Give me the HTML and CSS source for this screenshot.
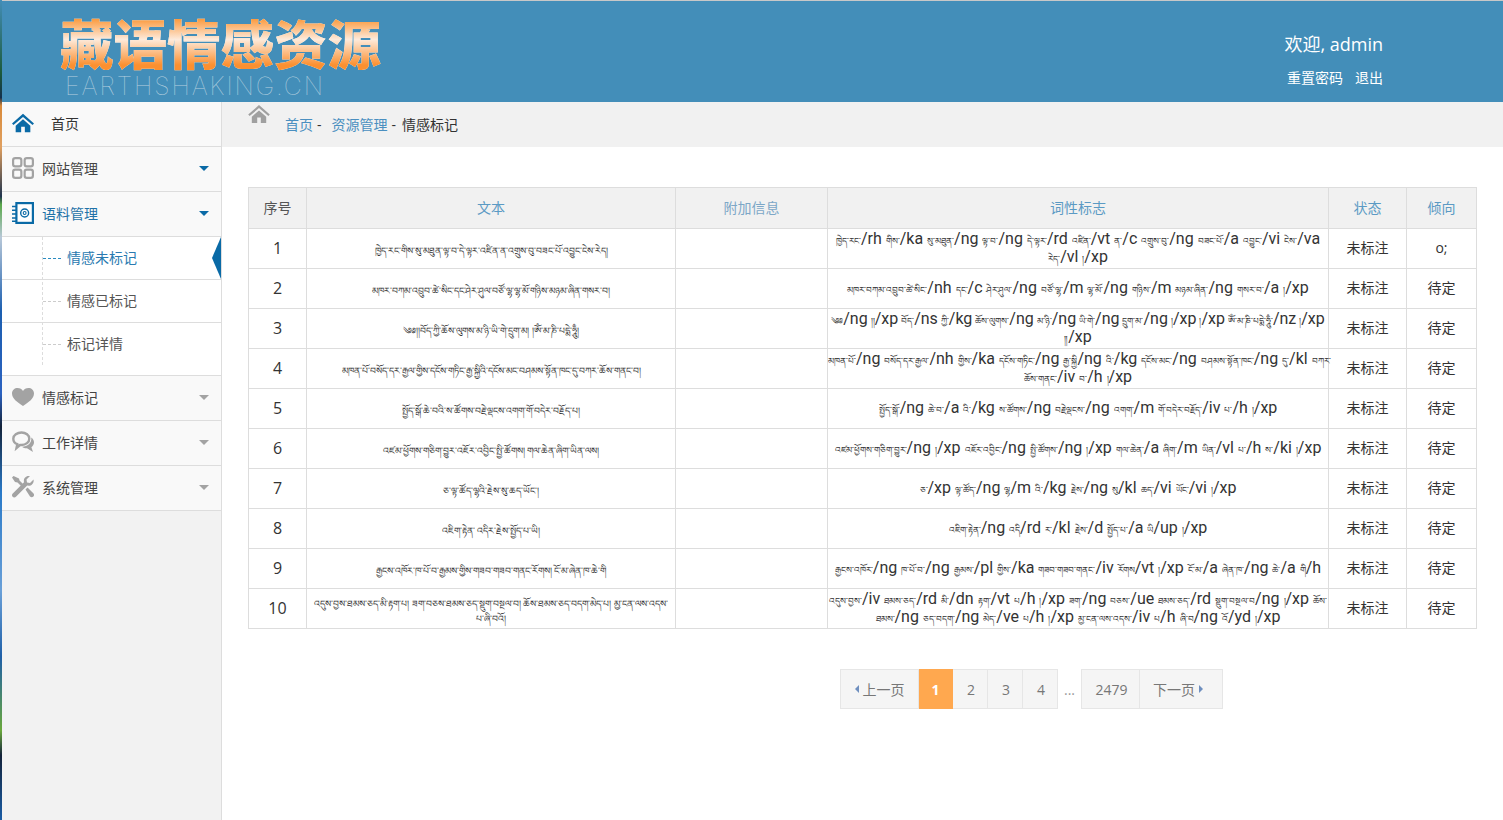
FILE: index.html
```html
<!DOCTYPE html>
<html lang="zh">
<head>
<meta charset="utf-8">
<title>藏语情感资源</title>
<link rel="stylesheet" href="styles.css">
</head>
<body>
<div class="page">
<header class="top">
  <div class="logo">
    <div class="logo-cn">藏语情感资源</div>
    <div class="logo-en">EARTHSHAKING.CN</div>
  </div>
  <div class="user">
    <div class="hello">欢迎, admin</div>
    <div class="links"><a>重置密码</a><a>退出</a></div>
  </div>
</header>
<div class="body">
  <aside class="side">
    <div class="item home">
      <svg class="ico" viewBox="0 0 24 20"><path fill="#0a6aa6" d="M12 0 0 10.500l1.600 1.800L12 3.400l10.400 8.900 1.600-1.800zM4 13v7h6v-6h4v6h6v-7l-8-7z"/></svg>
      <span>首页</span>
    </div>
    <div class="item">
      <svg class="ico" viewBox="0 0 20 20"><g fill="none" stroke="#a3a3a3" stroke-width="2"><rect x="1" y="1" width="7.500" height="7.500" rx="2"/><rect x="11.500" y="1" width="7.500" height="7.500" rx="2"/><rect x="1" y="11.500" width="7.500" height="7.500" rx="2"/><rect x="11.500" y="11.500" width="7.500" height="7.500" rx="2"/></g></svg>
      <span>网站管理</span><i class="caret blue"></i>
    </div>
    <div class="item open">
      <svg class="ico" viewBox="0 0 20 20"><path fill="#0a6aa6" d="M3 0h17v20H3z"/><path fill="#fff" d="M5 2h13v16H5z"/><circle cx="11.500" cy="10" r="3.600" fill="none" stroke="#0a6aa6" stroke-width="1.300"/><circle cx="11.500" cy="10" r="1.300" fill="none" stroke="#0a6aa6"/><path stroke="#0a6aa6" stroke-width="1.400" d="M0 4h4M0 7.500h4M0 11h4M0 14.500h4M0 17.500h4"/></svg>
      <span>语料管理</span><i class="caret blue"></i>
    </div>
    <ul class="sub">
      <li class="cur">情感未标记</li>
      <li>情感已标记</li>
      <li class="last">标记详情</li>
    </ul>
    <div class="item">
      <svg class="ico" viewBox="0 0 22 18"><path fill="#a3a3a3" d="M11 18C5 14 0 10.500 0 5.500 0 2 2.800 0 5.500 0 8 0 10 1.200 11 3c1-1.800 3-3 5.500-3C19.200 0 22 2 22 5.500 22 10.500 17 14 11 18z"/></svg>
      <span>情感标记</span><i class="caret"></i>
    </div>
    <div class="item">
      <svg class="ico" viewBox="0 0 22 22"><path fill="none" stroke="#a3a3a3" stroke-width="2.400" d="M9.500 1.500c4.300 0 7.800 2.700 7.800 6.200s-3.500 6.300-7.800 6.300H8l-3.500 3 .8-3.800C3 12.300 1.300 10.200 1.300 7.700c0-3.500 3.900-6.200 8.200-6.200z"/><path fill="#a3a3a3" d="M19.300 6.500c1.700 1.300 2.700 3 2.700 4.800 0 2-1 3.700-2.600 4.900l1.600 4.800-6-3.800c-2 .1-3.600-.4-5-1.500 5.500-.3 9.800-3 9.300-9.200z"/></svg>
      <span>工作详情</span><i class="caret"></i>
    </div>
    <div class="item">
      <svg class="ico" viewBox="0 0 22 22"><path fill="#a3a3a3" d="M1.500 0 0 1.500l3 4.500 2.500.5 4.300 4.300 2-2-4.300-4.300L7 2.500zM21.500 3.500 18 7l-3-.5-.5-3L18 0c-3-.8-6.200 1.500-6.200 4.700l.2 1.500L1 17.200c-1.300 1.300-1.300 2.500-.4 3.600 1 1 2.400 1 3.600-.2l11-11 1.500.2c3.200 0 5.600-3.200 4.800-6.300z"/><path fill="#a3a3a3" d="m13.500 13.500 2-2 5.800 5.800c1 1 1 2.300.1 3.300-1 1-2.400 1-3.400 0z"/></svg>
      <span>系统管理</span><i class="caret"></i>
    </div>
  </aside>
  <main class="main">
    <nav class="crumb">
      <svg class="crumb-home" viewBox="0 0 24 20"><path fill="#a0a0a0" d="M12 0 0 10.500l1.600 1.800L12 3.400l10.400 8.900 1.600-1.800zM4 13v7h6v-6h4v6h6v-7l-8-7z"/></svg>
      <a class="c1">首页</a><span class="sep">-</span><a class="c2">资源管理</a><span class="sep">-</span><span class="c3">情感标记</span>
    </nav>
    <div class="content">
      <table class="grid">
        <thead>
          <tr><th class="c-no plain">序号</th><th class="c-text">文本</th><th class="c-extra">附加信息</th><th class="c-tag">词性标志</th><th class="c-st">状态</th><th class="c-dir">倾向</th></tr>
        </thead>
        <tbody>
          <tr><td class="no">1</td><td class="bo">ཁྱེད་རང་གིས་སུ་མཐུན་ལྟ་བ་དེ་ལྟར་འཛིན་ན་འགྲུས་བུ་བཟང་པོ་འབྱུང་ངེས་རེད།</td><td></td><td class="tag"><b>ཁྱེད་རང་</b>/rh <b>གིས་</b>/ka <b>སུ་མཐུན་</b>/ng <b>ལྟ་བ་</b>/ng <b>དེ་ལྟར་</b>/rd <b>འཛིན་</b>/vt <b>ན་</b>/c <b>འགྲུས་བུ་</b>/ng <b>བཟང་པོ་</b>/a <b>འབྱུང་</b>/vi <b>ངེས་</b>/va<br><b>རེད་</b>/vl <b>།</b>/xp</td><td>未标注</td><td>o;</td></tr>
          <tr><td class="no">2</td><td class="bo">མཁར་བཀམ་འབྲུབ་ཚེ་སིང་དང་ཤེར་ཤུལ་བཙོ་ལྷ་ལྷ་མོ་གཉིས་མཉམ་ཞིན་གསར་བ།</td><td></td><td class="tag"><b>མཁར་བཀམ་འབྲུབ་ཚེ་སིང་</b>/nh <b>དང་</b>/c <b>ཤེར་ཤུལ་</b>/ng <b>བཙོ་ལྷ་</b>/m <b>ལྷ་མོ་</b>/ng <b>གཉིས་</b>/m <b>མཉམ་ཞིན་</b>/ng <b>གསར་བ་</b>/a <b>།</b>/xp</td><td>未标注</td><td>待定</td></tr>
          <tr><td class="no">3</td><td class="bo">༄༅།།བོད་ཀྱི་ཆོས་ལུགས་མ་ཉི་ཡི་གེ་དྲུག་མ། །ཨོཾ་མ་ཎི་པདྨེ་ཧཱུྃ།</td><td></td><td class="tag tight"><b>༄༅</b>/ng <b>།།</b>/xp <b>བོད་</b>/ns <b>ཀྱི་</b>/kg <b>ཆོས་ལུགས་</b>/ng <b>མ་ཉི་</b>/ng <b>ཡི་གེ་</b>/ng <b>དྲུག་མ་</b>/ng <b>།</b>/xp <b>།</b>/xp <b>ཨོཾ་མ་ཎི་པདྨེ་ཧཱུྃ་</b>/nz <b>།</b>/xp<br><b>༎</b>/xp</td><td>未标注</td><td>待定</td></tr>
          <tr><td class="no">4</td><td class="bo">མཁན་པོ་བསོད་དར་རྒྱལ་གྱིས་དངོས་གཏིང་རྒྱ་སྐྱིའི་དངོས་མང་བཤམས་སྟོན་ཁང་དུ་བཀར་ཆོས་གནང་བ།</td><td></td><td class="tag"><b>མཁན་པོ་</b>/ng <b>བསོད་དར་རྒྱལ་</b>/nh <b>གྱིས་</b>/ka <b>དངོས་གཏིང་</b>/ng <b>རྒྱ་སྐྱི</b>/ng <b>འི་</b>/kg <b>དངོས་མང་</b>/ng <b>བཤམས་སྟོན་ཁང་</b>/ng <b>དུ་</b>/kl <b>བཀར་</b><br><b>ཆོས་གནང་</b>/iv <b>བ་</b>/h <b>།</b>/xp</td><td>未标注</td><td>待定</td></tr>
          <tr><td class="no">5</td><td class="bo">སྤྱོད་སྒོ་ཆེ་བའི་ས་ཚོགས་བརྗེ་ལྡངས་འགག་གོ་བདེར་བརྗོད་པ།</td><td></td><td class="tag"><b>སྤྱོད་སྒོ་</b>/ng <b>ཆེ་བ་</b>/a <b>འི་</b>/kg <b>ས་ཚོགས་</b>/ng <b>བརྗེ་ལྡངས་</b>/ng <b>འགག་</b>/m <b>གོ་བདེར་བརྗོད་</b>/iv <b>པ་</b>/h <b>།</b>/xp</td><td>未标注</td><td>待定</td></tr>
          <tr><td class="no">6</td><td class="bo">འཛམ་ཕྱོགས་གཅིག་བྱུར་འཇོར་འབྱིང་སྤྱི་ཚོགས། གལ་ཆེན་ཞིག་ཡིན་ལས།</td><td></td><td class="tag"><b>འཛམ་ཕྱོགས་གཅིག་བྱུར་</b>/ng <b>།</b>/xp <b>འཇོར་འབྱིང་</b>/ng <b>སྤྱི་ཚོགས་</b>/ng <b>།</b>/xp <b>གལ་ཆེན་</b>/a <b>ཞིག་</b>/m <b>ཡིན་</b>/vl <b>པ་</b>/h <b>ས་</b>/ki <b>།</b>/xp</td><td>未标注</td><td>待定</td></tr>
          <tr><td class="no">7</td><td class="bo">ཅ་ལྟ་ཚོད་ལྷའི་རྗེས་སུ་ཆད་ཡོང་།</td><td></td><td class="tag"><b>ཅ་</b>/xp <b>ལྟ་ཚོད་</b>/ng <b>ལྷ</b>/m <b>འི་</b>/kg <b>རྗེས་</b>/ng <b>སུ</b>/kl <b>ཆད་</b>/vi <b>ཡོང་</b>/vi <b>།</b>/xp</td><td>未标注</td><td>待定</td></tr>
          <tr><td class="no">8</td><td class="bo">འཇིག་རྟེན་ འདིར་རྗེས་སྤྱོད་པ་ཡི།</td><td></td><td class="tag"><b>འཇིག་རྟེན་</b>/ng <b>འདི</b>/rd <b>ར་</b>/kl <b>རྗེས་</b>/d <b>སྤྱོད་པ་</b>/a <b>ཡི</b>/up <b>།</b>/xp</td><td>未标注</td><td>待定</td></tr>
          <tr><td class="no">9</td><td class="bo">རྒྱངས་འཁོར་ཁ་པོ་བ་རྒྱམས་གྱིས་གཟབ་གཟབ་གནང་རོགས། ངོ་མ་ཞེན་ཁ་ཆེ་གི</td><td></td><td class="tag"><b>རྒྱངས་འཁོར་</b>/ng <b>ཁ་པོ་བ་</b>/ng <b>རྒྱམས་</b>/pl <b>གྱིས་</b>/ka <b>གཟབ་གཟབ་གནང་</b>/iv <b>རོགས</b>/vt <b>།</b>/xp <b>ངོ་མ་</b>/a <b>ཞེན་ཁ་</b>/ng <b>ཆེ་</b>/a <b>གི</b>/h</td><td>未标注</td><td>待定</td></tr>
          <tr><td class="no">10</td><td class="bo">འདུས་བྱས་ཐམས་ཅད་མི་རྟག་པ། ཟག་བཅས་ཐམས་ཅད་སྡུག་བསྔལ་བ། ཆོས་ཐམས་ཅད་བདག་མེད་པ། མྱ་ངན་ལས་འདས་<br>པ་ཞི་བའོ།</td><td></td><td class="tag"><b>འདུས་བྱས་</b>/iv <b>ཐམས་ཅད་</b>/rd <b>མི་</b>/dn <b>རྟག་</b>/vt <b>པ</b>/h <b>།</b>/xp <b>ཟག་</b>/ng <b>བཅས་</b>/ue <b>ཐམས་ཅད་</b>/rd <b>སྡུག་བསྔལ་བ</b>/ng <b>།</b>/xp <b>ཆོས་</b><br><b>ཐམས་</b>/ng <b>ཅད་བདག་</b>/ng <b>མེད་</b>/ve <b>པ</b>/h <b>།</b>/xp <b>མྱ་ངན་ལས་འདས་</b>/iv <b>པ</b>/h <b>ཞི་བ</b>/ng <b>འོ</b>/yd <b>།</b>/xp</td><td>未标注</td><td>待定</td></tr>
        </tbody>
      </table>
      <div class="pager">
        <a class="prev"><i class="tri l"></i>上一页</a><a class="on">1</a><a>2</a><a>3</a><a>4</a><span class="dots">...</span><a class="far">2479</a><a class="next">下一页<i class="tri r"></i></a>
      </div>
    </div>
  </main>
</div>
</div>
</body>
</html>
```
FILE: styles.css
```css
* { box-sizing: border-box; }
html, body { margin: 0; padding: 0; height: 100%; }
body {
  font-family: "Open Sans", "Noto Sans CJK SC", sans-serif;
  font-size: 14px;
  color: #333;
  background: #fff;
  overflow: hidden;
}
.page {
  height: 820px;
  border-left: 2px solid #1c3552;
  border-image: linear-gradient(#438eb9 0, #1c5a3a 9%, #14304c 12%, #d98a3a 13%, #e0a060 18%, #20344e 24%, #5aa84a 25%, #b8c8d8 29%, #1c5fb0 38%, #2c62c0 48%, #14233a 52%, #2a7ac8 60%, #6aa0d8 72%, #2060a8 80%, #6aa83c 89%, #14233a 92%, #1a5ea8 100%) 1;
}
.top {
  height: 102px;
  background: #438eb9;
  border-top: 1px solid #c8c8c8;
  display: flex;
  justify-content: space-between;
}
.logo { padding: 9px 0 0 58px; }
.logo-cn {
  font-family: "Noto Sans CJK SC", sans-serif;
  font-weight: 900;
  font-size: 53.5px;
  line-height: 64px;
  white-space: nowrap;
  color: transparent;
  background: linear-gradient(#fb9a3e 14%, #fdeadb 46%, #fb9030 86%);
  -webkit-background-clip: text;
  background-clip: text;
  filter: drop-shadow(0 0 .6px #fff);
}
.logo-en {
  margin: 2px 0 0 5px;
  font-family: Inter, "Liberation Sans", sans-serif;
  font-weight: 100;
  font-size: 25px;
  line-height: 20px;
  color: #b4cfdf;
  white-space: nowrap;
  letter-spacing: 1.9px;
}
.user { width: 220px; padding: 30px 120px 0 0; color: #fff; text-align: right; white-space: nowrap; display: flex; flex-direction: column; align-items: flex-end; }
.hello { font-size: 18px; line-height: 26px; }
.links { margin-top: 9px; display: flex; gap: 12px; font-size: 14px; line-height: 22px; font-family: "Noto Sans CJK SC", sans-serif; }

.body { display: flex; height: 718px; }
.side { width: 220px; background: #f2f2f2; border-right: 1px solid #ddd; flex: none; color: #444; }
.item {
  height: 45px;
  background: #f9f9f9;
  border-bottom: 1px solid #ddd;
  display: flex;
  align-items: center;
  padding: 0 10px 2px;
  position: relative;
  font-size: 14px;
}
.item .ico { width: 22px; height: 22px; margin-right: 8px; flex: none; }
.home span { margin-left: 9px; color: #333; }
.open span { color: #1f72a8; }
.caret { position: absolute; right: 12px; top: 19px; border: 5.5px solid transparent; border-top-color: #a3a3a3; border-bottom: 0; }
.caret.blue { border-top-color: #0a6aa6; }
.sub { list-style: none; margin: 0; padding: 0; background: #fff; border-bottom: 1px solid #ddd; position: relative; }
.sub::before { content: ""; position: absolute; left: 40px; top: 0; height: 128px; border-left: 1px dashed #ddd; }
.sub li { height: 43px; line-height: 42px; padding-left: 65px; border-bottom: 1px solid #ddd; position: relative; color: #555; }
.sub li::before { content: ""; position: absolute; left: 41px; top: 21px; width: 18px; border-top: 1px dashed #ccc; }
.sub li.last { height: 52px; border-bottom: 0; }
.sub li.cur { color: #2a7ab0; }
.sub li.cur::before { border-top-color: #2a8bc0; }
.sub li.cur::after { content: ""; position: absolute; right: 0; top: 0; border: solid transparent; border-width: 21px 9px 21px 0; border-right-color: #0a6aa6; }

.main { flex: 1; min-width: 0; }
.crumb { height: 45px; background: #f1f1f1; position: relative; padding: 15px 0 0 63px; display: flex; align-items: flex-start; font-size: 14px; line-height: 16px; }
.crumb-home { position: absolute; left: 26px; top: 3px; width: 22px; height: 18px; }
.crumb a { color: #4a8fc0; }
.sep { margin: 0 8px 0 4px; color: #333; }
.c2 { margin-left: 2px; }
.c3 { color: #333; margin-left: -2px; }
.content { padding: 40px 26px 0 26px; }
.grid { border-collapse: collapse; table-layout: fixed; width: 1228px; }
.grid th, .grid td { border: 1px solid #ddd; text-align: center; padding: 0 0 2px; }
.grid th { height: 41px; background: #f1f1f1; font-weight: 400; font-size: 14px; color: #5b9ac4; }
.grid th.plain { color: #555; }
.grid th.c-extra { color: #7ca7c7; }
.c-no { width: 58px; } .c-text { width: 369px; } .c-extra { width: 152px; }
.c-tag { width: 501px; } .c-st { width: 78px; } .c-dir { width: 70px; }
.grid td { height: 40px; font-size: 14px; color: #333; padding-bottom: 3px; }
.grid td.no { font-size: 16px; padding-bottom: 2px; }
.grid td.bo { font-size: 9.2px; line-height: 15px; padding: 4px 0 0; white-space: nowrap; }
.grid td.tag { font-family: Roboto, "Open Sans", sans-serif; font-size: 16px; line-height: 15px; padding: 0; white-space: nowrap; }
.grid td.tight { word-spacing: -1px; }
.tag b { font-size: 8.8px; font-weight: 400; }

.pager { display: flex; align-items: stretch; height: 40px; margin: 40px 0 0 592px; font-size: 14px; color: #777; }
.pager a { display: flex; align-items: center; justify-content: center; width: 35px; padding-left: 2px; background: #f5f5f5; border: 1px solid #e6e6e6; border-left: 0; color: #777; }
.pager .prev { width: 79px; padding-left: 0; border-left: 1px solid #e6e6e6; }
.pager .on { width: 34px; padding-left: 0; background: #ffa84f; border-color: #ffa84f; color: #fff; font-weight: 700; }
.pager .far { width: 59px; border-left: 1px solid #e6e6e6; }
.pager .next { width: 83px; padding: 0 6px 0 0; }
.dots { width: 23px; display: flex; align-items: center; justify-content: center; color: #999; }
.tri { display: inline-block; border: 4px solid transparent; }
.tri.l { border-left: 0; border-right-color: #6f8fbf; margin-right: 4px; }
.tri.r { border-right: 0; border-left-color: #6f8fbf; margin-left: 4px; }
```
